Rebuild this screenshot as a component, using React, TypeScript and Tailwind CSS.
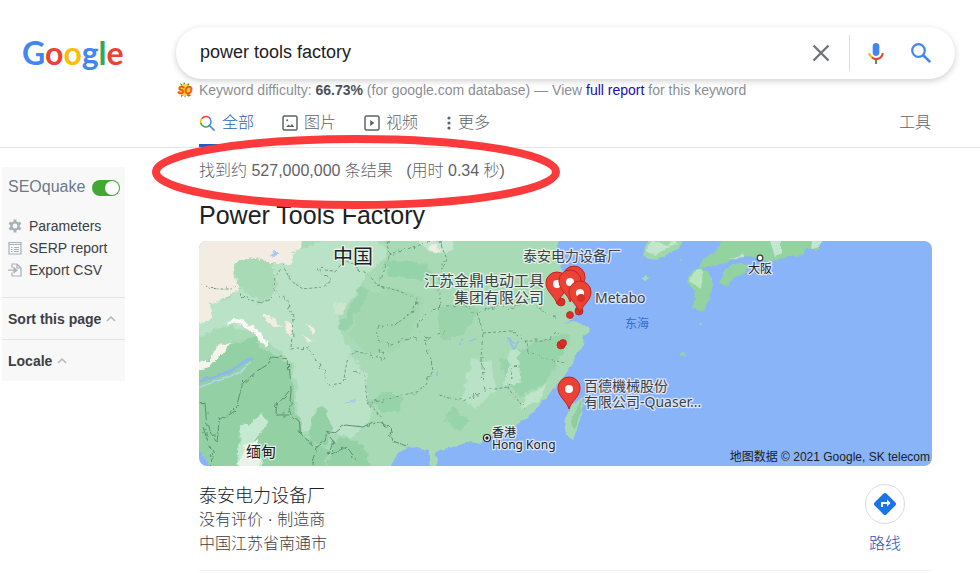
import type { ReactNode } from "react";

const SANS = "font-['Liberation_Sans','Noto_Sans_CJK_SC',sans-serif]";

function Logo() {
  return (
    <a
      href="#home"
      aria-label="Google"
      className="font-['Lato','Open_Sans',sans-serif] text-[32px] leading-10 font-bold"
    >
      <span className="text-[#4285f4]">G</span>
      <span className="text-[#ea4335]">o</span>
      <span className="text-[#fbbc05]">o</span>
      <span className="text-[#4285f4]">g</span>
      <span className="text-[#34a853]">l</span>
      <span className="text-[#ea4335]">e</span>
    </a>
  );
}

function MicIcon() {
  return (
    <svg viewBox="0 0 24 24" className="size-6">
      <path fill="#4285f4" d="M12 15c1.800 0 3.300-1.310 3.300-2.970V4.970C15.300 3.310 13.800 2 12 2S8.700 3.310 8.700 4.970v7.060C8.700 13.690 10.200 15 12 15z" />
      <path fill="#34a853" d="M11 18.080h2V23h-2z" />
      <path fill="#fbbc05" d="M7.050 16.870C5.480 15.580 4.300 13.900 4.300 12h2c0 1.450 1.060 2.420 2.170 3.380z" />
      <path fill="#ea4335" d="M12 16.930a4.970 4.970 0 0 1-3.540-1.550l-1.410 1.490C8.320 18.150 10.060 19.200 12 19.200c3.870 0 7.690-2.920 7.690-7.200h-1.990c0 2.920-2.740 4.930-5.700 4.930z" />
    </svg>
  );
}

function SearchBar() {
  return (
    <form
      role="search"
      className="flex h-[52px] items-center rounded-full bg-white pl-6 pr-[22px] shadow-[0_2px_6px_rgba(32,33,36,0.22)]"
      onSubmit={(e) => e.preventDefault()}
    >
      <input
        type="text"
        aria-label="Search"
        defaultValue="power tools factory"
        className="min-w-0 flex-1 bg-transparent pb-[2px] text-lg text-[#202124] outline-none"
      />
      <button type="reset" aria-label="Clear" className="mr-4 grid size-6 place-items-center">
        <svg viewBox="0 0 24 24" className="size-6" fill="none" stroke="#70757a" strokeWidth="2.400">
          <path d="M4.500 4.500l15 15M19.500 4.500l-15 15" />
        </svg>
      </button>
      <span className="h-9 w-px bg-[#dadce0]" />
      <button type="button" aria-label="Search by voice" className="ml-[14px]">
        <MicIcon />
      </button>
      <button type="submit" aria-label="Search" className="ml-[21px]">
        <svg viewBox="0 0 24 24" className="size-6" fill="none" stroke="#4285f4">
          <circle cx="9.500" cy="9.500" r="6.300" strokeWidth="2.200" />
          <path d="M14 14l7.200 7.200" strokeWidth="2.600" />
        </svg>
      </button>
    </form>
  );
}

function SeoBadge() {
  return (
    <svg viewBox="0 0 16 16" className="size-4 shrink-0">
      <path d="M4 4L3 1l3 2 1-3 2 3 3-2v3M4 12l0 3 3-2 1 3 1-3 3 2-1-3" fill="#4d9a2a" />
      <circle cx="8" cy="8" r="6" fill="#ffd34d" />
      <text x="8" y="12" textAnchor="middle" fontSize="10" fontWeight="700" fontStyle="italic" fill="#f2560c" stroke="#f2560c" strokeWidth="0.500">
        SQ
      </text>
    </svg>
  );
}

function KeywordLine() {
  return (
    <p className="flex items-center text-sm leading-5 font-normal whitespace-nowrap text-[#8b8f94]">
      <SeoBadge />
      <span className="ml-[6px]">
        Keyword difficulty: <b className="font-bold text-[#4d5156]">66.73%</b> (for google.com database) — View{" "}
        <a href="#report" className="text-[#1a0dab]">full report</a> for this keyword
      </span>
    </p>
  );
}

function Tab({ icon, label, active }: { icon: ReactNode; label: string; active?: boolean }) {
  return (
    <a
      href="#tab"
      className={
        active
          ? "flex h-full items-start gap-[6px] border-b-[3px] border-[#1a5dc8] text-[#2866b8]"
          : "flex h-full items-start gap-[6px] border-b-[3px] border-transparent text-[#5f6368]"
      }
    >
      <span className="flex h-6 items-center">{icon}</span>
      {label}
    </a>
  );
}

function Tabs() {
  return (
    <nav className="flex h-9 items-start pl-[23px] pr-[24px] text-base leading-6">
      <Tab
        active
        label="全部"
        icon={
          <svg viewBox="0 0 18 18" className="size-[17px]" fill="none" strokeWidth="1.600">
            <path d="M2 9.500A5.800 5.800 0 0 1 4 2.800" stroke="#fbbc05" />
            <path d="M3.200 3.600A5.800 5.800 0 0 1 11.500 3.300" stroke="#ea4335" />
            <path d="M11 3A5.800 5.800 0 0 1 11 11.200L16.500 16.500" stroke="#4285f4" />
            <path d="M1.800 8.500A5.800 5.800 0 0 0 11.400 11" stroke="#34a853" />
          </svg>
        }
      />
      <div className="ml-7 h-full">
        <Tab
          label="图片"
          icon={
            <svg viewBox="0 0 16 16" className="size-4" fill="none" stroke="#5f6368" strokeWidth="1.500">
              <rect x="1" y="1" width="14" height="14" rx="1.500" />
              <path d="M4 12l2.500-2.600 1.600 1.500L10 9l2.300 3z" fill="#5f6368" stroke="none" />
              <circle cx="5.200" cy="5.200" r="1" fill="#5f6368" stroke="none" />
            </svg>
          }
        />
      </div>
      <div className="ml-7 h-full">
        <Tab
          label="视频"
          icon={
            <svg viewBox="0 0 16 16" className="size-4" fill="none" stroke="#5f6368" strokeWidth="1.500">
              <rect x="1" y="1" width="14" height="14" rx="1.500" />
              <path d="M6.200 5v6l4.200-3z" fill="#5f6368" stroke="none" />
            </svg>
          }
        />
      </div>
      <div className="ml-7 h-full">
        <Tab
          label="更多"
          icon={
            <svg viewBox="0 0 6 16" className="h-4 w-[6px]" fill="#5f6368">
              <circle cx="3" cy="3" r="1.600" />
              <circle cx="3" cy="8" r="1.600" />
              <circle cx="3" cy="13" r="1.600" />
            </svg>
          }
        />
      </div>
      <button type="button" className="ml-auto text-[#5f6368]">工具</button>
    </nav>
  );
}

function SideLink({ icon, label }: { icon: ReactNode; label: string }) {
  return (
    <li>
      <a href="#seo" className="flex items-center gap-[7px]">
        <svg viewBox="0 0 14 14" className="size-[14px]" fill="none" stroke="#a9b1b8" strokeWidth="1.200">
          {icon}
        </svg>
        {label}
      </a>
    </li>
  );
}

function Caret() {
  return (
    <svg viewBox="0 0 10 6" className="h-[6px] w-[10px]" fill="none" stroke="#b4b8bc" strokeWidth="1.500">
      <path d="M1 5l4-4 4 4" />
    </svg>
  );
}

function Sidebar() {
  return (
    <aside className="ml-[2px] w-[123px] bg-[#f8f8f9] text-sm text-[#3c4043]">
      <div className="h-[130px] pt-2 pr-[5px] pl-[6px]">
        <label className="flex items-center justify-between text-base leading-6 text-[#6b7a86]">
          SEOquake
          <input
            type="checkbox"
            role="switch"
            defaultChecked
            className="mt-[2px] h-4 w-7 shrink-0 appearance-none rounded-full bg-[#43a832] before:ml-[13px] before:mt-px before:block before:size-[14px] before:rounded-full before:bg-white"
          />
        </label>
        <ul className="mt-4 leading-[22px]">
          <SideLink
            label="Parameters"
            icon={
              <>
                <circle cx="7" cy="7" r="3.600" strokeWidth="2.400" />
                <path d="M7 0.500v2.500M7 11v2.500M1.300 3.700l2.200 1.300M10.500 9l2.200 1.300M1.300 10.300l2.200-1.300M10.500 5l2.200-1.300" strokeWidth="2.800" />
              </>
            }
          />
          <SideLink
            label="SERP report"
            icon={<path d="M1 1.500h12v11.500H1zM1 3.500h12M3 6.500h1.500M6 6.500h5M3 8.500h1.500M6 8.500h5M3 10.500h1.500M6 10.500h5" />}
          />
          <SideLink
            label="Export CSV"
            icon={<path d="M4 5V1h5l4 4v8H4V9.500M9 1v4h4M0 7.200h8M6 4.800l3 2.400-3 2.400z" />}
          />
        </ul>
      </div>
      <button type="button" className="flex h-[42px] w-full items-center gap-[5px] border-t border-[#e2e4e7] px-[6px] font-bold">
        Sort this page <Caret />
      </button>
      <button type="button" className="flex h-[42px] w-full items-center gap-[5px] border-t border-[#e2e4e7] px-[6px] font-bold">
        Locale <Caret />
      </button>
    </aside>
  );
}

function Pin({ x, y }: { x: number; y: number }) {
  return (
    <g transform={`translate(${x} ${y})`}>
      <path d="M0 0C-2-8-11-12-11-21A11 11 0 0 1 11-21C11-12 2-8 0 0z" fill="#ea4335" stroke="#c5221f" strokeWidth="1" />
      <circle cy="-20" r="4" fill="#fff" />
    </g>
  );
}

const MAINLAND =
  "M-5-5H360L356 10 361 21 367 36 373 50 378 69 374 78 365 82 375 80 383 82 391 89 384 97 385 104 378 111 374 122 364 137 351 152 341 164 328 177 314 186 301 190 291 197 281 202 268 201 254 206 241 209 236 212 239 219 236 230H232L231 216 229 209 218 206 209 207 199 212 194 220 190 230H12L6 216-5 200z";

function MapView() {
  return (
    <svg
      viewBox="0 0 733 225"
      preserveAspectRatio="xMidYMid slice"
      role="img"
      aria-label="Map of results"
      className="h-[225px] w-full rounded-lg bg-[#8ab4f8] font-['Noto_Sans','Noto_Sans_CJK_SC',sans-serif]"
    >
      <defs>
        <clipPath id="land"><path d={MAINLAND} /></clipPath>
        <filter id="rough" x="-5%" y="-5%" width="110%" height="110%">
          <feTurbulence type="fractalNoise" baseFrequency="0.08" numOctaves="3" seed="4" result="n" />
          <feDisplacementMap in="SourceGraphic" in2="n" scale="11" xChannelSelector="R" yChannelSelector="G" />
        </filter>
        <filter id="coast">
          <feTurbulence type="fractalNoise" baseFrequency="0.15" numOctaves="2" seed="7" result="n" />
          <feDisplacementMap in="SourceGraphic" in2="n" scale="4" xChannelSelector="R" yChannelSelector="G" />
        </filter>
      </defs>

      <g filter="url(#coast)">
        <path d={MAINLAND} fill="#a8dab5" />
        <g clipPath="url(#land)">
          <g filter="url(#rough)">
            <path d="M-10 60L30 58 90 10 160-10 190 10 165 40 140 75 150 110 165 130 172 180 150 196 128 185 100 190 96 125 70 100 30 85-10 95z" fill="#b9e2c7" />
            <path d="M165 55L200 45 225 60 215 85 200 110 170 112 150 95z" fill="#a2d7b0" />
            <path d="M-10-10H108L98 8 92 24 76 22 48 18 34 30 40 50 12 62 14 78-10 86z" fill="#f3ece2" />
            <path d="M34 24L52 18 74 28 78 50 60 62 44 52z" fill="#a8dab5" />
            <path d="M-10 128L20 110 50 96 78 116 92 124 96 168 110 200 128 210 126 236H-10z" fill="#93d1a5" />
            <path d="M112 178L124 165 134 190 128 206 110 200z" fill="#93d1a5" />
            <path d="M132 202L148 196 165 204 172 230H128z" fill="#93d1a5" />
            <path d="M160 48L172 50 156 74 148 90 140 88 150 68z" fill="#98d2ab" />
            <path d="M186 20L230 24 238 40 212 38 190 34z" fill="#95d3a8" />
            <path d="M240 70L262 58 280 70 268 90 250 100 240 88z" fill="#9ad4aa" />
            <path d="M300 120L330 105 350 95 372 92 362 118 345 142 322 155 308 140z" fill="#98d4aa" />
            <path d="M272 120L292 118 296 148 278 168 264 160z" fill="#b9e2c7" />
            <path d="M310 110L322 112 318 140 306 148z" fill="#bce4c9" />
            <path d="M168 160L186 150 206 160 198 170 182 172z" fill="#97d3a9" />
            <path d="M325 158L348 142 340 160 322 170z" fill="#bfe6cb" />
            <path d="M250 165L270 180 262 190 246 182z" fill="#98d4aa" />
            <path d="M218-5H258L250 10 232 12z" fill="#c3e7cd" />
            <path d="M40 190L62 172 70 182 56 200 66 230H38z" fill="#c6e9d1" />
            <path d="M46 206L60 200 58 230H38z" fill="#eaf2ea" />
            <path d="M62 74L72 74 84 84 76 86z" fill="#f3ece2" />
            <path d="M84 76L92 80 94 94 88 92zM108 82L116 88 114 92zM106 94L113 100 110 103zM230 6L242 5 240 12z" fill="#f3ece2" />
            <path d="M24 80L44 78 56 86 60 94 72 100 70 104 58 100 50 90 40 84 28 84z" fill="#f8f8f6" />
            <path d="M-4 122L10 118 18 106 34 102 28 110 18 116 8 128-4 132z" fill="#f6f3ed" />
            <path d="M134 62L146 60 144 74 136 72z" fill="#cbe6cb" />
            <path d="M72 12L78 14 82 12zM147 162L156 158 154 162z" fill="#a9c6f2" />
          </g>
          <path d="M-4 141L14 136 32 130 48 119 54 117" stroke="#8db8ec" strokeWidth="3" fill="none" />
          <path d="M-4 148L18 140 40 132 52 121" stroke="#b5d7e8" strokeWidth="1.500" fill="none" />
          <path d="M310 97l4 5 5-1-3 6-5-3zM270 100l7-2M260 103l4-4M238 130v6" stroke="#94bdf0" strokeWidth="1.500" fill="none" />
          <g fill="none" stroke="#6f9c80" strokeWidth="1" strokeDasharray="3 2" filter="url(#coast)">
            <path d="M2 44L20 48 38 48 48 58 62 62 74 56 76 36 84 25 92 40 104 48 124 46 132 40 118 28 134 30 148 20 170 34 178 44" />
            <path d="M76 50L90 62 94 80 92 108 108 106 116 118 124 130 130 144 144 142 148 120 156 110 186 118 180 108" />
            <path d="M178 44L200 50 218 58 212 72 196 84 180 84 176 98 192 104 214 96 228 100 234 130 222 150 204 154 172 162" />
            <path d="M188 0L190 16 180 44M190 14L214 6 232 0M240 0L248 18 240 36 242 66 230 70 220 80 218 88 228 98 246 90" />
            <path d="M242 66L262 62 278 72 300 64 316 68 328 58 344 70 356 78M278 72L284 90 282 118 286 150 264 160 240 154" />
            <path d="M284 92L312 90 326 100 344 100 360 92M316 122L308 146 286 150M326 100L332 112 350 118 366 122M308 146L326 168M156 130L166 136 168 160 184 178" />
          </g>
          <g fill="none" stroke="#5f8f74" strokeWidth="1" filter="url(#coast)">
            <path d="M-2 164L6 162 8 186 18 202 20 180 36 170 44 142 58 130 68 124 74 116 90 118 92 150 90 172 100 180 102 194 118 206 126 200 128 190 136 192 146 184 164 186 176 180 190 188 194 200 210 206" />
            <path d="M90 150L78 164 76 174 90 174M128 192L134 200 130 214 148 206 158 220M4 186L14 214 10 230M118 206L112 224" />
          </g>
        </g>
        <path d="M383 156L384 165 380 182 374 199 367 194 365 181 371 167z" fill="#a8dab5" />
        <path d="M382 158L383 168 375 190 372 180z" fill="#8fcf9f" />
        <path d="M450-4L443 14 454 19 468 14 479 9 486-4z" fill="#a0d8ae" />
        <path d="M454-2L446 10 456 14 470 6zM474-2L468 6 480 2z" fill="#c3e7cd" />
        <path d="M442 37L447 34 450 37 446 40z" fill="#a8dab5" />
        <path d="M524-4L518 9 504 19 499 27 511 26 528 21 541 14 554 16 570 21 584 17 604 14 608 7 618 9 624-4z" fill="#93d3a0" />
        <path d="M570-4L576 16 582 12 582-4zM614-4L612 8 620 6 624-4zM530 18L544 13 544 16z" fill="#c3e7cd" />
        <path d="M494 29L488 41 494 48 497 57 493 67 504 71 509 61 514 44 510 32 502 27z" fill="#93d3a0" />
        <path d="M497 28L490 40 502 48 504 30z" fill="#b9e5c1" />
        <path d="M524 31L521 42 528 46 534 38 544 34 550 24 534 22z" fill="#93d3a0" />
        <path d="M499 82h3v3h-3zM482 112h4v3h-4zM481 18h2v2h-2z" fill="#93d3a0" />
      </g>

      <g fill="#d93025" stroke="#b3261e" strokeWidth="0.800">
        <circle cx="362" cy="61" r="4" />
        <circle cx="371" cy="74" r="3.500" />
        <circle cx="380" cy="70" r="4" />
        <circle cx="362" cy="104" r="4" />
        <circle cx="364" cy="102" r="3.500" />
      </g>
      <Pin x={375} y={57} />
      <Pin x={358} y={63} />
      <Pin x={371} y={61} />
      <Pin x={381} y={72} />
      <circle cx="382" cy="57" r="4" fill="#d93025" />
      <Pin x={370} y={168} />

      <circle cx="561" cy="17" r="2.800" fill="#fff" stroke="#3c4043" strokeWidth="1.300" />
      <circle cx="288" cy="197" r="3.500" fill="#fff" stroke="#202124" strokeWidth="1.200" />
      <circle cx="288" cy="197" r="1.700" fill="#202124" />

      <g fill="#3c4043" stroke="#ffffffb3" strokeWidth="2.500" paintOrder="stroke" strokeLinejoin="round">
        <text x="134" y="23" fontSize="20" fill="#202124">中国</text>
        <text x="47" y="216" fontSize="15" fill="#202124">缅甸</text>
        <text x="324" y="20" fontSize="14">泰安电力设备厂</text>
        <text x="345" y="45" fontSize="15" textAnchor="end">江苏金鼎电动工具</text>
        <text x="345" y="62" fontSize="15" textAnchor="end">集团有限公司</text>
        <text x="396" y="62" fontSize="14">Metabo</text>
        <text x="385" y="150" fontSize="14">百德機械股份</text>
        <text x="385" y="166" fontSize="14">有限公司-Quaser...</text>
        <text x="293" y="196" fontSize="12" fill="#202124">香港</text>
        <text x="293" y="208" fontSize="12" fill="#202124">Hong Kong</text>
        <text x="549" y="32" fontSize="12" fill="#202124">大阪</text>
      </g>
      <text x="426" y="87" fontSize="12" fill="#2f6fd0">东海</text>
      <text x="731" y="220" fontSize="12" textAnchor="end" fill="#202124" className={SANS}>
        地图数据 © 2021 Google, SK telecom
      </text>
    </svg>
  );
}

function PlaceCard() {
  return (
    <article className="flex items-start justify-between border-b border-[#f1f3f4] pt-4 pb-[14px] text-base leading-6 font-light text-[#3c4043]">
      <div className="pt-[2px]">
        <h3 className="text-lg leading-6 text-[#202124]">泰安电力设备厂</h3>
        <p>没有评价 · 制造商</p>
        <p>中国江苏省南通市</p>
      </div>
      <a href="#route" className="mr-[27px] flex flex-col items-center gap-2 pt-[2px] text-[#1a56b8]">
        <span className="grid size-10 place-items-center rounded-full border border-[#dadce0]">
          <svg viewBox="0 0 24 24" className="size-6" fill="#1a73e8">
            <path d="M22.430 10.590l-9.010-9.010c-.75-.75-2.070-.76-2.830 0l-9 9c-.78.78-.78 2.040 0 2.820l9 9c.39.390.900.580 1.410.580.510 0 1.020-.190 1.410-.580l8.990-8.990c.79-.76.800-2.020.030-2.820zM14 14.500V12h-4v3H8v-4c0-.550.450-1 1-1h5V7.500l3.500 3.500z" />
          </svg>
        </span>
        路线
      </a>
    </article>
  );
}

export default function App() {
  return (
    <div className={`min-h-screen bg-white ${SANS}`}>
      <header className="flex border-b border-[#e4e6e9] pt-[27px] font-light">
        <div className="w-44 shrink-0 pl-[22px] pt-[6px]">
          <Logo />
        </div>
        <div className="min-w-0 flex-1 pr-[25px]">
          <SearchBar />
          <div className="pt-px pb-[11px] pl-px">
            <KeywordLine />
          </div>
          <Tabs />
        </div>
      </header>
      <div className="flex items-start">
        <div className="w-[199px] shrink-0 pt-[19px]">
          <Sidebar />
        </div>
        <main className="min-w-0 flex-1 pr-12">
          <div className="relative pt-[11px]">
            <p className="text-base leading-6 font-light whitespace-pre text-[#5f6368]">
              找到约 527,000,000 条结果   (用时 0.34 秒)
            </p>
            <svg
              viewBox="0 0 410 76"
              className="pointer-events-none absolute -top-[14px] -left-12 h-[76px] w-[410px]"
              fill="none"
              stroke="#fb3b3b"
              strokeWidth="8"
            >
              <ellipse cx="205" cy="38" rx="200" ry="33" />
            </svg>
          </div>
          <h1 className="mt-4 mb-[10px] text-[25px] leading-8 text-[#202124]">Power Tools Factory</h1>
          <MapView />
          <PlaceCard />
        </main>
      </div>
    </div>
  );
}
